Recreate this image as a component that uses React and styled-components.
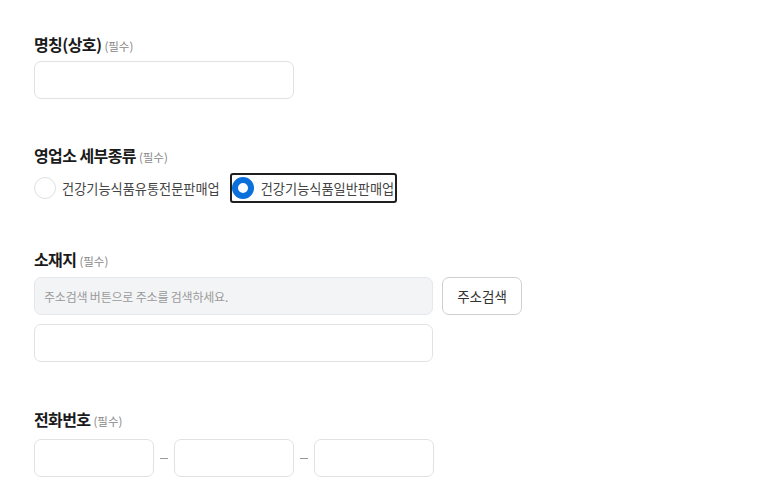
import React, { useState } from "react";
import styled, { createGlobalStyle } from "styled-components";

const Global = createGlobalStyle`
  html, body { margin: 0; padding: 0; background: #fff; }
  body { font-family: "Noto Sans CJK KR", "Noto Sans", sans-serif; color: #222; }
  * { box-sizing: border-box; }
`;

const Form = styled.div`
  padding: 33px 34px 20px;
  display: flex;
  flex-direction: column;
`;

const Section = styled.div`
  display: flex;
  flex-direction: column;
  gap: ${(p) => p.$gap || 7}px;
  margin-top: ${(p) => p.$top || 0}px;
`;

const Title = styled.div`
  height: 22px;
  line-height: 22px;
  font-size: 16px;
  font-weight: 700;
  color: #1a1a1a;
  letter-spacing: -0.6px;
  white-space: nowrap;
`;

const Required = styled.span`
  font-size: 11.5px;
  font-weight: 400;
  color: #888;
  margin-left: 3px;
  letter-spacing: 0;
`;

const Input = styled.input`
  width: ${(p) => p.$w}px;
  height: 38px;
  border: 1px solid ${(p) => (p.readOnly ? "#e6e7ea" : "#e2e2e2")};
  background: ${(p) => (p.readOnly ? "#f3f4f6" : "#fff")};
  border-radius: 7px;
  padding: 0 9px;
  font-family: inherit;
  font-size: 12px;
  color: #333;
  outline: none;
  &::placeholder { color: #9a9a9a; letter-spacing: -0.2px; }
`;

const Row = styled.div`
  display: flex;
  align-items: center;
  gap: 9px;
`;

const Stack = styled.div`
  display: flex;
  flex-direction: column;
  gap: 9px;
`;

const Button = styled.button`
  width: 80px;
  height: 38px;
  border: 1px solid #cfcfcf;
  border-radius: 7px;
  background: #fff;
  font-family: inherit;
  font-size: 13.5px;
  color: #333;
  cursor: pointer;
`;

const RadioRow = styled.div`
  display: flex;
  align-items: center;
  gap: 7px;
  margin-left: -2px;
`;

const Option = styled.label`
  display: flex;
  align-items: center;
  gap: ${(p) => (p.$checked ? 7 : 6)}px;
  height: 30px;
  padding: 0 1px 0 0;
  border: 2px solid ${(p) => (p.$checked ? "#1f1f1f" : "transparent")};
  border-radius: 3px;
  cursor: pointer;
`;

const Circle = styled.span`
  width: 22px;
  height: 22px;
  border-radius: 50%;
  flex-shrink: 0;
  background: #fff;
  border: ${(p) => (p.$checked ? "6px solid #0b6fdc" : "1px solid #e0e0e0")};
`;

const OptionText = styled.span`
  font-size: 13.2px;
  color: #444;
  letter-spacing: 0;
  white-space: nowrap;
`;

const Dash = styled.span`
  width: 8px;
  height: 1px;
  background: #999;
  flex-shrink: 0;
`;

const PhoneRow = styled.div`
  display: flex;
  align-items: center;
  gap: 6px;
`;

export default function App() {
  const [kind, setKind] = useState(1);
  const options = ["건강기능식품유통전문판매업", "건강기능식품일반판매업"];
  return (
    <>
      <Global />
      <Form>
        <Section $gap={6}>
          <Title>
            명칭(상호)<Required>(필수)</Required>
          </Title>
          <Input $w={260} />
        </Section>

        <Section $top={45}>
          <Title>
            영업소 세부종류<Required>(필수)</Required>
          </Title>
          <RadioRow>
            {options.map((o, i) => (
              <Option key={o} $checked={kind === i} onClick={() => setKind(i)}>
                <Circle $checked={kind === i} />
                <OptionText>{o}</OptionText>
              </Option>
            ))}
          </RadioRow>
        </Section>

        <Section $top={45}>
          <Title>
            소재지<Required>(필수)</Required>
          </Title>
          <Stack>
            <Row>
              <Input $w={399} readOnly placeholder="주소검색 버튼으로 주소를 검색하세요." />
              <Button>주소검색</Button>
            </Row>
            <Input $w={399} />
          </Stack>
        </Section>

        <Section $top={46} $gap={9}>
          <Title>
            전화번호<Required>(필수)</Required>
          </Title>
          <PhoneRow>
            <Input $w={120} />
            <Dash />
            <Input $w={120} />
            <Dash />
            <Input $w={120} />
          </PhoneRow>
        </Section>
      </Form>
    </>
  );
}
